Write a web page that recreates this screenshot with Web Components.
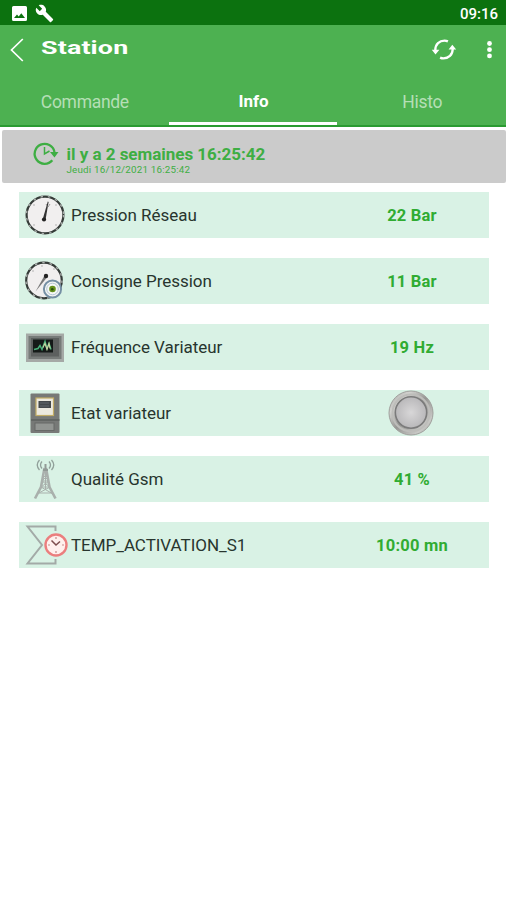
<!DOCTYPE html>
<html lang="fr">
<head>
<meta charset="utf-8">
<title>Station</title>
<style>
html,body{margin:0;height:100%;background:#fff;font-family:Roboto,"Liberation Sans",sans-serif;overflow:hidden}
</style>
</head>
<body>
<station-app></station-app>
<script>
const icons = {
gauge:`<svg viewBox="0 0 42 42"><circle cx="21" cy="21" r="18.4" fill="#f1efef" stroke="#353b38" stroke-width="2.2"/><circle cx="21" cy="21" r="18.6" fill="none" stroke="#a9adab" stroke-width="1.4" stroke-dasharray="2.5 5"/><g fill="#aaa"><circle cx="10" cy="11" r=".8"/><circle cx="10" cy="31" r=".8"/><circle cx="32" cy="31" r=".8"/><circle cx="32" cy="11" r=".8"/></g><path d="M23.8 7.5L24.6 8 21.5 26 18.5 26Z" fill="#333"/><path d="M22 10l2 3 2-3" stroke="#777" fill="none" stroke-width=".7"/><circle cx="20" cy="25.5" r="2.1" fill="#222"/></svg>`,
setpoint:`<svg viewBox="0 0 42 42"><circle cx="20" cy="20.500" r="17.8" fill="#f1efef" stroke="#353b38" stroke-width="2.2"/><circle cx="20" cy="20.500" r="18" fill="none" stroke="#a9adab" stroke-width="1.4" stroke-dasharray="2.5 5"/><g fill="#aaa"><circle cx="9" cy="11" r=".8"/><circle cx="18" cy="6" r=".8"/><circle cx="30" cy="9" r=".8"/></g><path d="M11.5 31.5L20.500 15.500l2.800 1.5Z" fill="#777"/><circle cx="22" cy="16" r="2.2" fill="#222"/><circle cx="28.500" cy="29" r="8.6" fill="#f5f7f5" stroke="#758fa4" stroke-width="2"/><circle cx="28.500" cy="29" r="5.8" fill="none" stroke="#b4c4d4" stroke-width="1"/><circle cx="28.500" cy="29" r="3.3" fill="#64901c"/><circle cx="28.300" cy="29.300" r="1.3" fill="#294d0c"/></svg>`,
scope:`<svg viewBox="0 0 42 42"><path fill="#a5a9a6" d="M2 7.500h38V36H2z"/><path fill="#777b79" d="M4.500 10h33v23h-33z"/><path fill="#5d605f" d="M7 12h28v18.500H7z"/><path fill="#151a18" d="M9 13.500h20v13H9z"/><path d="M10 23.500l4-1 2-3 2 4 3-8 2 7 2-5 2 6" fill="none" stroke="#48b27a" stroke-width="1.5"/><path d="M19 21.500l2-4 2 6 2-6 1 5" fill="none" stroke="#cbd4a0" stroke-width="1.100"/></svg>`,
meter:`<svg viewBox="0 0 42 42"><rect x="6.500" y="1.500" width="29" height="39.500" rx="1" fill="#777977"/><path d="M7 28h28.500" stroke="#5d605e" stroke-width="1.500"/><rect x="12" y="6" width="17.500" height="17.500" fill="#ece9df" stroke="#c2ac66" stroke-width="1.200"/><rect x="14.500" y="9" width="12.500" height="7" fill="#45494c"/><path d="M16 11h9M16 14h9" stroke="#777e83" stroke-width=".6"/><rect x="11" y="31" width="19" height="7.500" fill="#929592" stroke="#666966"/></svg>`,
antenna:`<svg viewBox="0 0 42 42"><g fill="none" stroke="#a9b0ac"><path d="M20.500 10l-3.500 19-6 11.500M22 10l3.500 19 6 11.500" stroke-width="2.600"/><path d="M18 23h7M17 29h9M15 35h13M19 17l6 6-8 6 12 7M24 17l-6 6 8 6-13 7M21.500 12v19" stroke-width="1"/></g><path d="M19 12h5M21.500 6v7" stroke="#929a96" stroke-width="2"/><g fill="none" stroke="#91a09a" stroke-width="1.300"><path d="M18 3.500q-3 3.500 0 7M25 3.500q3 3.500 0 7M15.500 2q-4.500 5 0 10M27.500 2q4.500 5 0 10"/></g></svg>`,
timer:`<svg viewBox="0 0 44 42"><path d="M31.500 7V2.500H3.500L18 21 3.500 39.500h28V35" fill="none" stroke="#a3aaa7" stroke-width="2"/><circle cx="32" cy="21" r="10.500" fill="#fff0ed" stroke="#eb7e7e" stroke-width="2.400"/><g stroke="#c98989" stroke-width="1.200"><path d="M32 13v2M32 27v2M24 21h2M38 21h2"/></g><path d="M27.500 16.500L32 21l4-3.500" fill="none" stroke="#7c4d4d" stroke-width="1.500"/></svg>`
};
const define=(name,html,fill)=>customElements.define(name,class extends HTMLElement{
 constructor(){super();this.attachShadow({mode:'open'})}
 connectedCallback(){this.shadowRoot.innerHTML=html;fill&&fill(this,this.shadowRoot)}
});
define('status-bar',`<style>
:host{display:flex;align-items:center;height:25px;background:#0c720f;color:#fff;padding:1px 8px 0 12px;box-sizing:border-box}
svg{display:block}.w{margin-left:8px}
span{margin-left:auto;font:500 15px/18px Roboto;padding-top:1px}
</style>
<svg width="15" height="15" viewBox="0 0 15 15"><path fill="#fff" fill-rule="evenodd" d="M1.500 0h12Q15 0 15 1.500v12q0 1.500-1.500 1.500h-12Q0 15 0 13.500v-12Q0 0 1.500 0zM2 12h11L9.300 7.300l-2.600 3.200L5 8.500z"/></svg>
<svg class="w" width="19" height="19" viewBox="0 0 24 24"><path fill="#fff" d="M22.700 19l-9.100-9.100c.9-2.300.4-5-1.500-6.900-2-2-5-2.400-7.400-1.300L9 6 6 9 1.600 4.700C.4 7.100.9 10.100 2.900 12.100c1.900 1.900 4.600 2.400 6.900 1.500l9.100 9.100c.4.400 1 .4 1.400 0l2.300-2.300c.5-.4.5-1.100.1-1.400z"/></svg>
<span>09:16</span>`);
define('tool-bar',`<style>
:host{display:flex;height:51px;color:#fff;padding:0 14px 0 10px;box-sizing:border-box}
svg{display:block}.b{margin-top:13px}
.t{margin:11px 0 0 17px;height:24px;font:700 18.500px/25px Roboto;transform:scaleX(1.45);transform-origin:0 0;letter-spacing:.1px}
.r{margin:12px 0 0 auto}.m{margin:15px 0 0 30px}
</style>
<svg class="b" width="14" height="24" viewBox="0 0 14 24" fill="none" stroke="#fff" stroke-width="1.700"><path d="M12.800 1L1.500 12l11.300 11"/></svg>
<span class="t"><slot></slot></span>
<svg class="r" width="26" height="25" viewBox="0 0 26 25"><g fill="none" stroke="#fff" stroke-width="2.300"><path d="M4.300 13C4.300 7 8.500 3.600 13.500 3.600q1.800 0 3.400.8M21.700 12c0 6-4.200 9.400-9.200 9.400q-1.800 0-3.400-.8"/></g><path d="M.8 12.800h7.600l-3.900 4.800zM17.600 12.500h7.600l-3.900-4.800z" fill="#fff"/></svg>
<svg class="m" width="5" height="20" viewBox="0 0 5 20" fill="#fff"><circle cx="2.500" cy="3.500" r="2.400"/><circle cx="2.500" cy="9.700" r="2.400"/><circle cx="2.500" cy="15.900" r="2.400"/></svg>`);
define('tab-item',`<style>
:host{display:flex;flex:1;justify-content:center;height:51px;padding:14px 0 0 1px;box-sizing:border-box;font:400 17.500px/24px Roboto;letter-spacing:-.3px;color:#b5dfb6;border-bottom:2px solid #2a9b31}
:host([active]){padding-top:13px;letter-spacing:-.1px;font-weight:700;color:#fff;font-size:17px;background:linear-gradient(#fff,#fff) 0 46px/100% 3px no-repeat}
</style><slot></slot>`);
define('app-header',`<style>:host{display:block;height:102px;background:#4db151}nav{display:flex}</style><slot></slot><nav><slot name="tab"></slot></nav>`);
define('update-banner',`<style>
:host{display:flex;margin:3px 0 0 1.500px;height:53px;background:#cbcbcb;border-radius:2px;color:#3eae43;padding-left:30px;box-sizing:border-box}
svg{margin-top:10px;flex:none}
div{margin-left:8px;padding-top:14px}
b{display:block;font:700 17px/20px Roboto;letter-spacing:-.02px}
small{display:block;font:400 9.800px/12px Roboto;letter-spacing:.2px}
</style><svg width="27" height="27" viewBox="0 0 27 27" fill="none" stroke="currentColor"><path d="M22.500 12A10 10 0 1 0 20.300 20.300" stroke-width="2.300"/><path d="M18 12h8.500l-4 5.500z" fill="currentColor" stroke="none"/><path d="M12.500 7v7l5-3" stroke-width="1.500"/></svg>
<div><b><slot></slot></b><small><slot name="date"></slot></small></div>`);
define('status-lamp',`<style>:host{display:block;width:46px;height:46px}</style>
<svg width="46" height="46" viewBox="0 0 46 46"><defs><linearGradient id="o" x1="0" y1="0" x2="1" y2="1"><stop stop-color="#a4a4a1"/><stop offset=".25" stop-color="#d2d2cf"/><stop offset=".5" stop-color="#969693"/><stop offset=".8" stop-color="#c9c9c6"/><stop offset="1" stop-color="#9a9a97"/></linearGradient><radialGradient id="i"><stop stop-color="#d8d7d8"/><stop offset="1" stop-color="#b9b8ba"/></radialGradient></defs><circle cx="23" cy="23" r="22" fill="url(#o)" stroke="#a0a09d"/><circle cx="23" cy="23" r="18.500" fill="none" stroke="#bdbdba" stroke-width="2"/><circle cx="23" cy="22.500" r="15.700" fill="url(#i)" stroke="#7b7b7b" stroke-width="1.600"/></svg>`);
define('info-row',`<style>
:host{display:grid;grid-template-columns:52px 1fr 154px;align-items:center;height:46px;background:#d9f2e5;color:#28352e}
.i{padding-left:5px}.i svg{display:block;height:42px;width:auto}
.l{font:400 17px/22px Roboto;letter-spacing:-.03px;white-space:nowrap;padding-bottom:1px}
.v{display:flex;justify-content:center;font:700 16.500px/22px Roboto;letter-spacing:.2px;color:#30ac32}
.v:not(.lamp){padding-top:1px}
</style><div class="i"></div><div class="l"></div><div class="v"><slot></slot></div>`,(h,r)=>{
 r.querySelector('.i').innerHTML=icons[h.getAttribute('icon')];
 r.querySelector('.l').textContent=h.getAttribute('label');
 r.querySelector('.v').classList.toggle('lamp',!!h.querySelector('status-lamp'));
});
define('station-app',`<style>:host{display:block}main{display:grid;gap:20px;padding:9px 17px 0 19px}status-lamp{margin-right:2px}</style>
<status-bar></status-bar>
<app-header><tool-bar>Station</tool-bar><tab-item slot="tab">Commande</tab-item><tab-item slot="tab" active>Info</tab-item><tab-item slot="tab">Histo</tab-item></app-header>
<update-banner>il y a 2 semaines 16:25:42<span slot="date">Jeudi 16/12/2021 16:25:42</span></update-banner>
<main>
<info-row icon="gauge" label="Pression Réseau">22 Bar</info-row>
<info-row icon="setpoint" label="Consigne Pression">11 Bar</info-row>
<info-row icon="scope" label="Fréquence Variateur">19 Hz</info-row>
<info-row icon="meter" label="Etat variateur"><status-lamp></status-lamp></info-row>
<info-row icon="antenna" label="Qualité Gsm">41 %</info-row>
<info-row icon="timer" label="TEMP_ACTIVATION_S1">10:00 mn</info-row>
</main>`);
</script>
</body>
</html>
